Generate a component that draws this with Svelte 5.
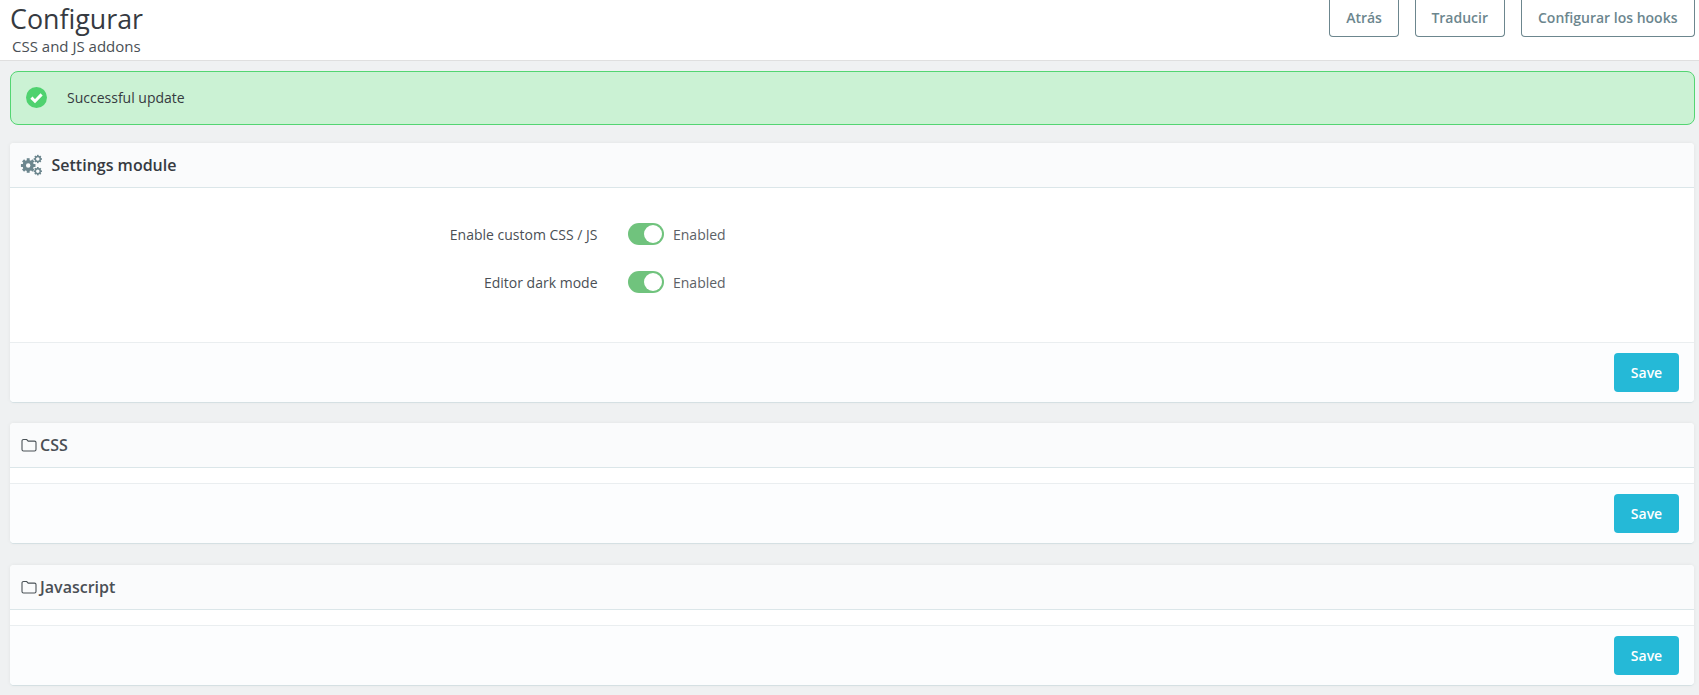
<script>
	const settings = [
		{ label: 'Enable custom CSS / JS' },
		{ label: 'Editor dark mode' }
	];
	const panels = ['CSS', 'Javascript'];
</script>

{#snippet cog(cx, cy, r, teeth, hole)}
	<g fill="#6c868e">
		{#each Array(teeth) as _, i (i)}
			<rect x={cx - r * 0.26} y={cy - r * 1.3} width={r * 0.52} height={r * 0.6} transform="rotate({(360 / teeth) * i} {cx} {cy})" />
		{/each}
		<circle {cx} {cy} r={r * (1 - hole / 2)} fill="none" stroke="#6c868e" stroke-width={r * hole} />
	</g>
{/snippet}

{#snippet folder()}
	<svg class="folder" width="16" height="14" viewBox="0 0 16 14" aria-hidden="true">
		<path d="M2.5 1.5h3.2l1.5 1.6h6.3a1.5 1.5 0 0 1 1.5 1.5v6.9a1.5 1.5 0 0 1-1.5 1.5H2.5A1.5 1.5 0 0 1 1 11.5V3a1.5 1.5 0 0 1 1.5-1.5z" fill="none" stroke="#4a5257" stroke-width="1.1" />
	</svg>
{/snippet}

<div class="page">
	<header class="top">
		<div class="titles">
			<h1>Configurar</h1>
			<p>CSS and JS addons</p>
		</div>
		<nav class="actions">
			<button type="button">Atrás</button>
			<button type="button">Traducir</button>
			<button type="button">Configurar los hooks</button>
		</nav>
	</header>

	<main class="content">
		<div class="alert">
			<svg width="21" height="21" viewBox="0 0 21 21" aria-hidden="true">
				<circle cx="10.5" cy="10.5" r="10.5" fill="#4fd26f" />
				<path d="M5.4 10.6l3.6 3.6 6.6-6.8" fill="none" stroke="#fff" stroke-width="3" />
			</svg>
			<span>Successful update</span>
		</div>

		<section class="card">
			<div class="card-head">
				<svg width="23" height="22" viewBox="0 0 23 22" aria-hidden="true">
					{@render cog(8.2, 11.5, 5.6, 8, 0.6)}
					{@render cog(17.8, 5, 3.2, 8, 0.45)}
					{@render cog(17.8, 17.2, 3.2, 8, 0.45)}
				</svg>
				<h2 class="strong">Settings module</h2>
			</div>
			<div class="form">
				{#each settings as s}
					<div class="row">
						<span class="label">{s.label}</span>
						<span class="switch"><span class="knob"></span></span>
						<span class="state">Enabled</span>
					</div>
				{/each}
			</div>
			<div class="card-foot"><button type="button" class="save">Save</button></div>
		</section>

		{#each panels as name}
			<section class="card">
				<div class="card-head thin">
					{@render folder()}
					<h2>{name}</h2>
				</div>
				<div class="spacer"></div>
				<div class="card-foot"><button type="button" class="save">Save</button></div>
			</section>
		{/each}
	</main>
</div>

<style>
	:global(body) {
		margin: 0;
		background: #eff1f2;
		font-family: 'Open Sans', sans-serif;
		color: #363a41;
	}
	.page {
		height: 695px;
		overflow: hidden;
	}
	.top {
		display: flex;
		justify-content: space-between;
		align-items: flex-start;
		height: 60px;
		background: #fff;
		border-bottom: 1px solid #dfdfdf;
		padding: 0 4px 0 10px;
	}
	h1 {
		margin: 0;
		font-size: 26.8px;
		font-weight: 400;
		line-height: 37px;
		color: #363a41;
	}
	.titles p {
		margin: 0 0 0 2px;
		font-size: 15px;
		line-height: 18px;
		color: #4a4f55;
	}
	.actions {
		display: flex;
		gap: 16px;
	}
	.actions button {
		height: 37px;
		padding: 0 16px 2px;
		background: #fff;
		border: 1px solid #6c868e;
		border-top: 0;
		border-radius: 0 0 4px 4px;
		color: #6c868e;
		font: 600 14px 'Open Sans', sans-serif;
	}
	.actions button:nth-child(2) {
		padding: 0 15.5px 2px;
	}
	.actions button:nth-child(3) {
		padding: 0 16.5px 2px;
	}
	.content {
		padding: 10px 4px 0 10px;
		display: flex;
		flex-direction: column;
	}
	.alert {
		display: flex;
		align-items: center;
		gap: 20px;
		height: 50px;
		padding: 0 0 2px 15px;
		background: #cbf2d4;
		border: 1px solid #53d572;
		border-radius: 8px;
		font-size: 14px;
		color: #363a41;
		margin-bottom: 18px;
	}
	.card {
		background: #fff;
		border-radius: 4px;
		box-shadow: 0 0 4px 0 rgba(0, 0, 0, 0.06), 0 1px 0 #dbe6e9;
		margin: 0 1px 21px 0;
	}
	.card:nth-child(3) {
		margin-bottom: 22px;
	}
	.card-head {
		display: flex;
		align-items: center;
		gap: 8.5px;
		height: 44px;
		padding-left: 10px;
		background: #fafbfc;
		border-bottom: 1px solid #dbe6e9;
		border-radius: 4px 4px 0 0;
	}
	.card-head.thin {
		gap: 3px;
		padding-left: 11px;
	}
	.folder {
		flex: none;
	}
	h2 {
		margin: 0;
		font-size: 16px;
		font-weight: 600;
		color: #4a4f55;
	}
	h2.strong {
		color: #363a41;
	}
	.form {
		height: 154px;
		padding-top: 22px;
		box-sizing: border-box;
	}
	.row {
		display: flex;
		align-items: center;
		height: 48px;
		font-size: 14px;
	}
	.label {
		width: 587.5px;
		text-align: right;
		color: #4a4f55;
	}
	.switch {
		display: flex;
		justify-content: flex-end;
		align-items: center;
		width: 36px;
		height: 22px;
		margin: 0 9px 0 30.5px;
		padding-right: 2px;
		box-sizing: border-box;
		background: #70c37d;
		border-radius: 11px;
	}
	.knob {
		width: 18px;
		height: 18px;
		background: #fff;
		border-radius: 50%;
	}
	.state {
		color: #5c6166;
	}
	.spacer {
		height: 15px;
	}
	.card-foot {
		display: flex;
		justify-content: flex-end;
		align-items: center;
		height: 59px;
		padding-right: 15px;
		background: #fcfdfe;
		border-top: 1px solid #eaeef0;
		border-radius: 0 0 4px 4px;
	}
	.save {
		width: 65px;
		height: 39px;
		background: #25b9d7;
		border: 0;
		border-radius: 4px;
		color: #fff;
		font: 600 14px 'Open Sans', sans-serif;
	}
</style>
